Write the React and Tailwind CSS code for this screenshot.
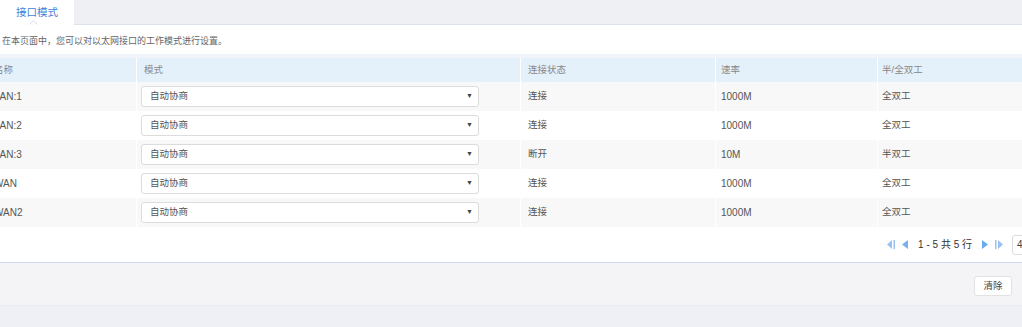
import React from 'react';

const rows = [
  { name: 'LAN:1', state: '连接', speed: '1000M', duplex: '全双工' },
  { name: 'LAN:2', state: '连接', speed: '1000M', duplex: '全双工' },
  { name: 'LAN:3', state: '断开', speed: '10M', duplex: '半双工' },
  { name: 'WAN', state: '连接', speed: '1000M', duplex: '全双工' },
  { name: 'WAN2', state: '连接', speed: '1000M', duplex: '全双工' },
];

const font = { fontFamily: '"Liberation Sans", "Noto Sans CJK SC", sans-serif' };

function Tri({ dir, bar, color }) {
  // little pager arrows: triangle with optional bar
  return (
    <svg width="10" height="11" viewBox="0 0 10 11">
      {dir === 'left' ? (
        <>
          <polygon points={bar ? '6,1 6,10 1,5.5' : '8,1 8,10 2,5.5'} fill={color} />
          {bar && <rect x="7.5" y="1" width="1.5" height="9" fill={color} />}
        </>
      ) : (
        <>
          {bar && <rect x="1" y="1" width="1.5" height="9" fill={color} />}
          <polygon points={bar ? '4,1 4,10 9,5.5' : '2,1 2,10 8,5.5'} fill={color} />
        </>
      )}
    </svg>
  );
}

export default function App() {
  return (
    <div className="w-[1022px] h-[327px] overflow-hidden bg-[#eef0f5] text-[#555]" style={font}>
      {/* Tab bar */}
      <div className="h-[25px] flex bg-[#eff0f4] border-b border-[#dce3ee]">
        <div className="relative w-[74px] h-[25px] -mb-px bg-white flex items-center justify-center">
          <span className="text-[10.5px] text-[#3f7ed6] pt-[1px]">接口模式</span>
          <svg className="absolute left-[29px] bottom-0" width="9" height="5" viewBox="0 0 9 5">
            <polyline points="0.5,4.5 4.5,0.8 8.5,4.5" fill="none" stroke="#d6dbe4" strokeWidth="1" />
          </svg>
        </div>
      </div>

      {/* Content */}
      <div className="bg-white border-b border-[#c9daf2]">
        <div className="h-[29px] flex items-center pl-[2px] pt-[4px] text-[9px] text-[#666]">
          在本页面中，您可以对以太网接口的工作模式进行设置。
        </div>
        <div className="h-[4px] bg-[#f1f5fb]" />

        <div className="ml-[-12px] w-[1050px] text-[9.5px]">
          <div className="grid grid-cols-[149px_384px_195px_162px_1fr] h-[24px] bg-[#e4f1fb] text-[#888]">
            <div className="flex items-center pl-[6px] border-r border-white">名称</div>
            <div className="flex items-center pl-[7px] border-r border-white">模式</div>
            <div className="flex items-center pl-[7px] border-r border-white">连接状态</div>
            <div className="flex items-center pl-[5px] border-r border-white">速率</div>
            <div className="flex items-center pl-[4px]">半/全双工</div>
          </div>
          {rows.map((r, i) => (
            <div
              key={r.name}
              className={`grid grid-cols-[149px_384px_195px_162px_1fr] h-[29px] ${i % 2 === 0 ? 'bg-[#f8f8f8]' : 'bg-white'}`}
            >
              <div className="flex items-center pl-[6px] border-r border-white text-[10px] text-[#555]">{r.name}</div>
              <div className="flex items-center pl-[4px] border-r border-white">
                <div className="w-[338px] h-[21px] bg-white border border-[#dcdcdc] rounded-[3px] flex items-center justify-between pl-[8px] pr-[5px] text-[#555]">
                  <span>自动协商</span>
                  <span className="text-[7px] text-[#444]">▼</span>
                </div>
              </div>
              <div className="flex items-center pl-[7px] border-r border-white">{r.state}</div>
              <div className="flex items-center pl-[5px] border-r border-white text-[10px]">{r.speed}</div>
              <div className="flex items-center pl-[4px]">{r.duplex}</div>
            </div>
          ))}
        </div>

        {/* Pager */}
        <div className="h-[35px] flex items-center justify-end -mr-[30px]">
          <div className="flex items-center gap-[4px]">
            <Tri dir="left" bar color="#9ac4ef" />
            <Tri dir="left" color="#78b1ec" />
            <span className="text-[10px] text-[#333] mx-[4px]">1 - 5 共 5 行</span>
            <Tri dir="right" color="#6aaaf0" />
            <Tri dir="right" bar color="#9ac4ef" />
          </div>
          <div className="ml-[8px] w-[40px] h-[20px] border border-[#dcdcdc] rounded-[3px] bg-white flex items-center pl-[4px] text-[10px] text-[#444]">
            40
          </div>
        </div>
      </div>

      {/* Footer */}
      <div className="h-[43px] bg-[#f4f4f7] flex items-start justify-end pr-[10px] pt-[13px] border-b border-[#e8e9ee]">
        <button className="w-[38px] h-[20px] bg-white border border-[#e2e2e2] rounded-[3px] text-[9.5px] text-[#444]">
          清除
        </button>
      </div>
    </div>
  );
}
